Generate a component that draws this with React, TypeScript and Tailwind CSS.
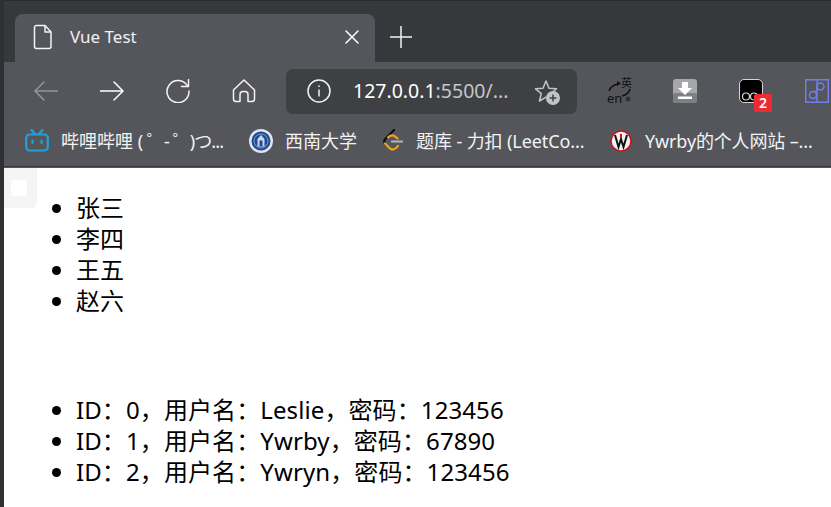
import React from "react";

const cjk = "font-['Noto_Sans','Noto_Sans_CJK_SC',sans-serif]";

function Stroke({ size = 24, className = "", sw = 1.5, children }: { size?: number; className?: string; sw?: number; children: React.ReactNode }) {
  return (
    <svg width={size} height={size} viewBox="0 0 24 24" fill="none" stroke="currentColor" strokeWidth={sw} strokeLinecap="round" strokeLinejoin="round" className={className}>
      {children}
    </svg>
  );
}

function Bookmark({ icon, label, width, gap = "" }: { icon: React.ReactNode; label: React.ReactNode; width: string; gap?: string }) {
  return (
    <div className={`flex items-center ${gap}`}>
      {icon}
      <span className={`${width} text-[18px] leading-[24px] text-[#f3f3f4] whitespace-nowrap ${cjk}`}>{label}</span>
    </div>
  );
}

export default function App() {
  return (
    <div className={`relative w-[831px] h-[507px] overflow-hidden bg-white ${cjk}`}>
      <div className="flex flex-col h-[168px] bg-[#55565c]">
        {/* tab strip */}
        <div className="h-[62px] bg-[#37383c] border-t border-[#2a2b2e] flex items-end pl-[15px]">
          <div className="w-[360px] h-[48px] bg-[#55565c] rounded-t-[8px] flex items-center pl-[18px] pr-[16px] pb-[2px] text-white">
            <svg width="20" height="26" viewBox="0 0 20 26" fill="none" stroke="#f4f4f5" strokeWidth="1.5" strokeLinejoin="round">
              <path d="M3.5 1.5h8.5l6 6.5v14.5a2 2 0 0 1-2 2H3.500a2 2 0 0 1-2-2V3.500a2 2 0 0 1 2-2z" />
              <path d="M12 1.500v6.500h6" />
            </svg>
            <span className="ml-[17px] text-[17px] leading-[24px] text-[#f1f1f2] flex-1">Vue Test</span>
            <svg width="14" height="14" viewBox="0 0 14 14" stroke="#ffffff" strokeWidth="1.500" strokeLinecap="round">
              <path d="M1 1l12 12M13 1L1 13" />
            </svg>
          </div>
          <svg width="22" height="22" viewBox="0 0 22 22" stroke="#f2f2f3" strokeWidth="1.500" className="ml-[15px] mb-[14px]">
            <path d="M11 0v22M0 11h22" />
          </svg>
        </div>

        {/* toolbar */}
        <div className="h-[58px] flex items-center pl-[34px]">
          <Stroke className="text-[#94959a]"><path d="M24 12H1M10 3l-9 9 9 9" /></Stroke>
          <Stroke className="ml-[42px] text-white"><path d="M0 12h23M14 3l9 9-9 9" /></Stroke>
          <Stroke className="ml-[42px] text-[#f4f4f5]"><path d="M21.500 7A11 11 0 1 0 23 12" /><path d="M22.500 0.500V7.500H15.500" /></Stroke>
          <Stroke className="ml-[42px] text-[#f4f4f5]"><path d="M1.500 11L12 1l10.500 10v9a2.500 2.500 0 0 1-2.500 2.500h-4v-7a3 3 0 0 0-3-3h-2a3 3 0 0 0-3 3v7H4a2.500 2.500 0 0 1-2.500-2.500z" /></Stroke>
          <div className="ml-[30px] w-[291px] h-[45px] rounded-[7px] bg-[#3f4044] flex items-center pl-[21px] relative">
            <svg width="24" height="24" viewBox="0 0 24 24" fill="none" stroke="#f2f2f3" strokeWidth="1.500">
              <circle cx="12" cy="12" r="11" />
              <path d="M12 10.500v7" />
              <path d="M12 6.500v1.500" />
            </svg>
            <span className="ml-[22px] text-[19.500px] leading-[26px] text-[#c5c6c8] whitespace-nowrap">
              <span className="text-white">127.0.0.1</span>:5500/...
            </span>
            <svg width="27" height="27" viewBox="0 0 27 27" className="absolute left-[248px] top-[10px]">
              <path d="M12 2l3 7.200 7.500.6-5.700 4.900 1.800 7.400L12 18.200 5.500 22l1.800-7.400L1.500 9.800 9 9.200z" fill="none" stroke="#c3c4c6" strokeWidth="1.500" strokeLinejoin="round" />
              <circle cx="19" cy="19" r="7" fill="#c3c4c6" />
              <path d="M19 15.500v7M15.500 19h7" stroke="#3f4044" strokeWidth="1.500" />
            </svg>
          </div>
          {/* extensions */}
          <svg width="26" height="28" viewBox="0 0 26 28" className="ml-[30px] overflow-visible">
            <path d="M2 14c1-3 4-6 9-7" fill="none" stroke="#111" strokeWidth="1.500" />
            <path d="M10 4l4 2.500-4 2.500z" fill="#111" />
            <path d="M23 12c-1 4-4 6-8 7" fill="none" stroke="#111" strokeWidth="1.500" />
            <circle cx="21" cy="22" r="2.500" fill="#333" />
            <text x="14" y="10" fontSize="11" fill="#111" fontFamily="'Noto Sans CJK SC',sans-serif">英</text>
            <text x="0" y="26" fontSize="13" fill="#111" fontFamily="'Noto Sans',sans-serif">en</text>
          </svg>
          <svg width="24" height="24" viewBox="0 0 24 24" className="ml-[40px]">
            <rect width="24" height="24" rx="3" fill="#a6a7a9" />
            <rect y="14" width="24" height="10" rx="2" fill="#7e7f82" />
            <path d="M9 3h6v6h4l-7 7-7-7h4z" fill="#fff" />
            <rect x="5" y="17.500" width="14" height="2.500" fill="#fff" />
          </svg>
          <div className="relative ml-[42px] w-[24px] h-[24px] rounded-[5px] bg-black border border-[#d6d6d8] -mt-[1px]">
            <svg width="22" height="22" viewBox="0 0 22 22" className="absolute left-0 top-0">
              <circle cx="6" cy="16.500" r="3.500" fill="none" stroke="#d6d6d8" strokeWidth="1.200" />
              <circle cx="14" cy="16.500" r="3.500" fill="none" stroke="#d6d6d8" strokeWidth="1.200" />
            </svg>
            <span className="absolute left-[14px] top-[14px] w-[18px] h-[18px] rounded-[2px] bg-[#ee2a35] text-white text-[14px] leading-[18px] text-center font-semibold">2</span>
          </div>
          <svg width="24" height="24" viewBox="0 0 24 24" fill="none" stroke="#6f7fe8" strokeWidth="1.500" className="ml-[42px]">
            <rect x="0.750" y="0.750" width="22.500" height="22.500" />
            <path d="M12 1v22" />
            <circle cx="15.500" cy="7.500" r="3.500" />
            <circle cx="8" cy="16" r="3.500" />
            <path d="M13 10l-3 3" />
          </svg>
        </div>

        {/* bookmarks */}
        <div className="h-[47px] flex items-center pl-[25px] border-b border-[#38393c] pb-[5px]">
          <Bookmark
            width="w-[163px] ml-[12px]"
            gap="mr-[25px]"
            label={<>哔哩哔哩 (<span className="tracking-[-0.9px]"> ゜- ゜)つ...</span></>}
            icon={
              <svg width="24" height="23" viewBox="0 0 24 23" fill="none" stroke="#23a0d8" strokeWidth="2.200" strokeLinecap="round">
                <rect x="1.200" y="5.500" width="21.600" height="16" rx="3.500" />
                <path d="M6.500 1l3.500 4M17.500 1L14 5" />
                <path d="M7.500 11.500v2.500M16.500 11.500v2.500" />
              </svg>
            }
          />
          <Bookmark
            width="w-[72px] ml-[12px]"
            gap="mr-[26px]"
            label="西南大学"
            icon={
              <svg width="24" height="24" viewBox="0 0 24 24">
                <circle cx="12" cy="12" r="12" fill="#dfe6f0" />
                <circle cx="12" cy="12" r="9.500" fill="#1c4a94" />
                <circle cx="12" cy="12" r="7" fill="none" stroke="#9fb4d6" strokeWidth="0.800" />
                <path d="M8.500 17.500V10l3.500-4 3.500 4v7.500z" fill="#cdd9ea" />
                <path d="M10.500 17v-5.500h3V17z" fill="#1c4a94" />
              </svg>
            }
          />
          <Bookmark
            width="w-[168px] ml-[13px] tracking-[-0.1px]"
            gap="mr-[26px]"
            label="题库 - 力扣 (LeetCo..."
            icon={
              <svg width="20" height="24" viewBox="0 0 20 24" fill="none" strokeWidth="2.200" strokeLinecap="round">
                <path d="M11 1L2 10.500q-1.500 2 0 4" stroke="#0c0c0c" />
                <path d="M2 14.500L6.500 19q3 3 6.500 0l2-2" stroke="#f0a021" />
                <path d="M5 8.500q3.500-3.500 7 -1l2.500 2" stroke="#f0a021" />
                <path d="M9 12.500h10" stroke="#b6b6b8" />
              </svg>
            }
          />
          <Bookmark
            width="w-[166px] ml-[13px] tracking-[-0.15px]"
            label="Ywrby的个人网站 –..."
            icon={
              <svg width="22" height="22" viewBox="0 0 22 22">
                <circle cx="11" cy="11" r="10" fill="#f2f2f2" stroke="#c4161c" strokeWidth="1.500" />
                <path d="M5 5l3.500 12L11 9l2.500 8L17 5" fill="none" stroke="#111" strokeWidth="2" />
                <path d="M11 4v4" stroke="#c4161c" strokeWidth="2" />
              </svg>
            }
          />
        </div>
      </div>

      {/* window edge + page */}
      <div className="absolute left-0 top-0 bottom-0 w-[4px] bg-[#2f3033]" />
      <div className="absolute left-[4px] top-[168px] w-[33px] h-[40px] rounded-br-[6px] bg-[#f5f5f5]">
        <div className="absolute left-[7px] top-[12px] w-[16px] h-[16px] rounded-[3px] bg-white" />
      </div>

      <div className="text-[24px] leading-[31px] text-black pl-[4px] pt-[24px]">
        <ul className="list-disc pl-[72px]">
          <li>张三</li>
          <li>李四</li>
          <li>王五</li>
          <li>赵六</li>
        </ul>
        <ul className="list-disc pl-[72px] mt-[78px] tracking-[0.1px]">
          <li>ID：0，用户名：Leslie，密码：123456</li>
          <li>ID：1，用户名：Ywrby，密码：67890</li>
          <li>ID：2，用户名：Ywryn，密码：123456</li>
        </ul>
      </div>
    </div>
  );
}
